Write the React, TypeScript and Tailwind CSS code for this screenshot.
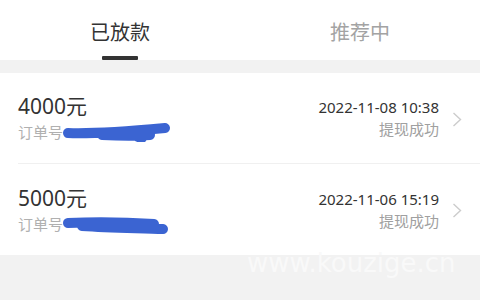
type Record = {
  id: string;
  amount: string;
  time: string;
  status: string;
  scribble: string;
};

const records: Record[] = [
  {
    id: "r1",
    amount: "4000元",
    time: "2022-11-08 10:38",
    status: "提现成功",
    scribble: "M6 11 C 30 12, 70 9, 103 6 M40 13 C 60 14, 75 14, 88 13 M76 15 L 80 16",
  },
  {
    id: "r2",
    amount: "5000元",
    time: "2022-11-06 15:19",
    status: "提现成功",
    scribble: "M6 9 C 30 8, 60 8, 92 10 M20 12 C 50 14, 80 14, 101 15",
  },
];

const font = { fontFamily: '"Noto Sans", "Noto Sans CJK SC", sans-serif' };

function Tabs() {
  return (
    <div className="flex h-[60px] bg-white">
      <div className="flex flex-1 flex-col items-center pt-[19px]">
        <span className="text-[20px] leading-[28px] text-[#333]">已放款</span>
        <span className="mt-[9px] h-[4px] w-[36px] rounded-[1px] bg-[#333]" />
      </div>
      <div className="flex flex-1 flex-col items-center pt-[19px]">
        <span className="text-[20px] leading-[28px] text-[#a3a3a3]">推荐中</span>
      </div>
    </div>
  );
}

function Chevron() {
  return (
    <svg width="10" height="15" viewBox="0 0 10 15" className="mt-[2px]">
      <polyline points="1.5,1 8.5,7.5 1.5,14" fill="none" stroke="#cccccc" strokeWidth="1.4" />
    </svg>
  );
}

function Row({ rec, last }: { rec: Record; last: boolean }) {
  return (
    <div className="pl-[18px]">
      <div
        className={
          "flex h-[91px] items-center justify-between pr-[18px] " +
          (last ? "" : "border-b border-[#f0f0f0]")
        }
      >
        <div className="flex flex-col">
          <span className="text-[21px] leading-[26px] text-[#333]">{rec.amount}</span>
          <div className="mt-[2px] flex items-center">
            <span className="text-[15px] leading-[22px] text-[#b0b0b0]">订单号</span>
            <svg width="110" height="20" viewBox="0 0 110 20" className="-ml-[1px]">
              <path d={rec.scribble} fill="none" stroke="#3b64d2" strokeWidth="10" strokeLinecap="round" />
            </svg>
          </div>
        </div>
        <div className="flex items-center gap-[13px]">
          <div className="flex flex-col items-end">
            <span className="text-[15px] leading-[22px] text-[#333]">{rec.time}</span>
            <span className="text-[15px] leading-[22px] text-[#a0a0a0]">{rec.status}</span>
          </div>
          <Chevron />
        </div>
      </div>
    </div>
  );
}

export default function App() {
  return (
    <div className="relative h-[300px] w-[480px] overflow-hidden bg-[#f2f2f2]" style={font}>
      <Tabs />
      <div className="h-[13px]" />
      <div className="bg-white">
        {records.map((r, i) => (
          <Row key={r.id} rec={r} last={i === records.length - 1} />
        ))}
      </div>
      <span
        className="absolute left-[247px] top-[247px] text-[26px] leading-[32px] text-[#f9f9f9]"
        style={{ fontFamily: '"DejaVu Sans", sans-serif' }}
      >
        www.kouzige.cn
      </span>
    </div>
  );
}
